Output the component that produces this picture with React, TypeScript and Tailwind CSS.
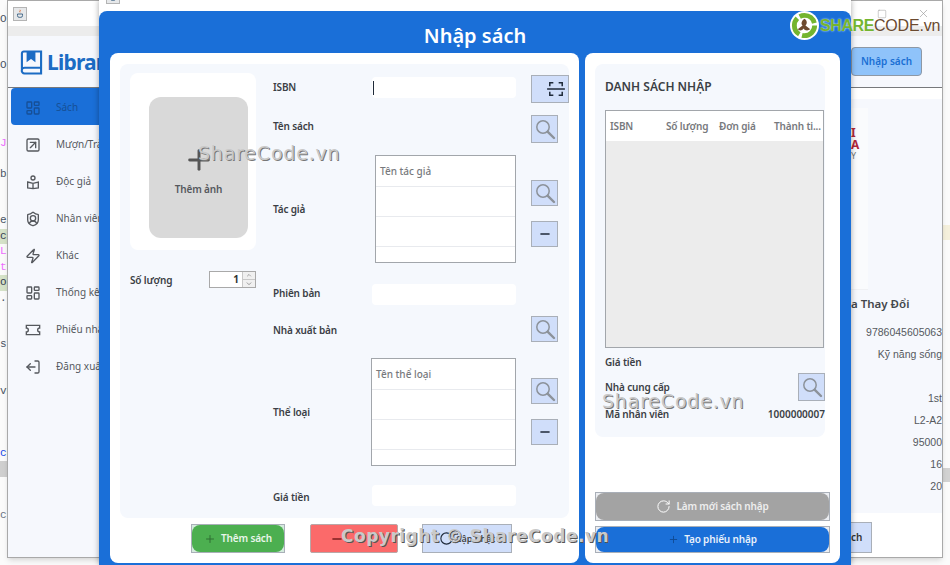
import { Minus, Plus, RotateCw, LayoutDashboard, SquareArrowUpRight, ShieldUser, Zap, LogOut, X, Square, ChevronUp, ChevronDown } from 'lucide-react';
import type { ReactNode } from 'react';

const font = "font-['Noto_Sans',sans-serif]";

const codeLines = [
  { t: '', c: '' }, { t: 'Oz', c: 'text-gray-600' }, { t: '', c: '' }, { t: '', c: '' },
  { t: 'Oz', c: 'text-gray-600' }, { t: '', c: '' }, { t: '', c: '' }, { t: '', c: '' },
  { t: '', c: '' }, { t: 'JS', c: 'text-fuchsia-400' }, { t: '', c: '' }, { t: 'ba', c: 'text-gray-600' },
  { t: '', c: '' }, { t: '', c: '' }, { t: 'es', c: 'text-gray-600' }, { t: 'c:l', c: 'text-gray-700 bg-[#d5e2c8]' },
  { t: 'Le', c: 'text-fuchsia-400' }, { t: 't', c: 'text-fuchsia-400' }, { t: 'or', c: 'text-gray-700 bg-[#d5e2c8]' }, { t: '.s', c: 'text-gray-600' },
  { t: '', c: '' }, { t: '', c: '' }, { t: 's', c: 'text-gray-600' }, { t: '', c: '' },
  { t: '', c: '' }, { t: 'vN', c: 'text-gray-600' }, { t: '', c: '' }, { t: '', c: '' },
  { t: '', c: '' }, { t: 'c1', c: 'text-blue-700' }, { t: '', c: 'bg-[#cfcfcf]' }, { t: '', c: '' },
  { t: '', c: '' }, { t: 'c', c: 'text-gray-500' },
];

const sideItems = [
  { label: 'Sách', icon: LayoutDashboard, active: true },
  { label: 'Mượn/Trả', icon: SquareArrowUpRight },
  { label: 'Độc giả', icon: ReaderIcon },
  { label: 'Nhân viên', icon: ShieldUser },
  { label: 'Khác', icon: Zap },
  { label: 'Thống kê', icon: LayoutDashboard },
  { label: 'Phiếu nhập', icon: TicketIcon },
  { label: 'Đăng xuất', icon: LogOut, flip: true },
];

const backValues = ['9786045605063', 'Kỹ năng sống', '', '1st', 'L2-A2', '95000', '16', '20'];

function ReaderIcon({ className }: { className?: string }) {
  return (
    <svg viewBox="0 0 24 24" fill="none" stroke="currentColor" strokeWidth="2" className={className}>
      <circle cx="12" cy="6" r="3" />
      <path d="M4 12l8 2 8-2v9l-8 1-8-1z M12 14v8" />
    </svg>
  );
}

function TicketIcon({ className }: { className?: string }) {
  return (
    <svg viewBox="0 0 24 24" fill="none" stroke="currentColor" strokeWidth="2" className={className}>
      <path d="M2 5h20v4a3 3 0 0 0 0 6v4H2v-4a3 3 0 0 0 0-6z" />
    </svg>
  );
}

function BookLogo() {
  return (
    <svg viewBox="0 0 24 25" className="w-[23px] h-[25px] text-[#1c6cc4]" fill="none" stroke="currentColor" strokeWidth="2.2">
      <path d="M2 20V3a2 2 0 0 1 2-2h18v23H5a3 3 0 0 1-3-4c0-1 1-2 3-2h17" />
      <path d="M8 1v9l3.5-2.5L15 10V1" fill="currentColor" />
    </svg>
  );
}

function MagnifierIcon() {
  return (
    <svg viewBox="0 0 22 22" className="w-[22px] h-[22px] text-[#8c929a]" fill="none" stroke="currentColor">
      <circle cx="9" cy="9" r="6.2" strokeWidth="1.5" />
      <path d="M13.8 13.8L20 20" strokeWidth="2.4" strokeLinecap="round" />
    </svg>
  );
}

function ScanIcon() {
  return (
    <svg viewBox="0 0 20 18" className="w-[18px] h-[16px] text-[#1f2a3a] ml-[12px]" fill="none" stroke="currentColor" strokeWidth="1.7">
      <path d="M3 6V2h4 M13 2h4v4 M3 12v4h4 M13 16h4v-4" />
      <path d="M0 9h20" />
    </svg>
  );
}

function SquareBtn({ children, w = 'w-[27px]', h = 'h-[27px]' }: { children: ReactNode; w?: string; h?: string }) {
  return (
    <div className={`${w} ${h} shrink-0 flex items-center justify-center bg-[#d0defa] border border-[#a9afb8]`}>
      {children}
    </div>
  );
}

const SearchBtn = ({ h = 'h-[26px]' }: { h?: string }) => (
  <SquareBtn h={h}>
    <MagnifierIcon />
  </SquareBtn>
);

const MinusBtn = () => (
  <SquareBtn h="h-[26px]">
    <Minus className="w-[14px] h-[14px] text-[#1f2a3a]" strokeWidth={2.4} />
  </SquareBtn>
);

const Label = ({ children }: { children: ReactNode }) => (
  <span className="block ml-[1px] text-[10px] tracking-[-0.15px] font-semibold text-[#3b3f45] leading-none whitespace-nowrap">{children}</span>
);

function Field({ label, pt, caret }: { label: string; pt: string; caret?: boolean }) {
  return (
    <div className="flex items-start h-[21px]">
      <div className={`w-[100px] ${pt}`}><Label>{label}</Label></div>
      <div className="w-[144px] h-[21px] bg-white rounded-sm flex items-center pl-[1px]">
        {caret && <div className="w-px h-[14px] bg-gray-800" />}
      </div>
    </div>
  );
}

function MiniTable({ title, w }: { title: string; w: string }) {
  return (
    <div className={`${w} h-[108px] bg-white border border-[#a2a6ab] flex flex-col`}>
      <div className="h-[31px] shrink-0 flex items-center pl-1 border-b border-[#e8eaee] text-[10px] font-medium text-[#77797d]">{title}</div>
      <div className="h-[30px] shrink-0 border-b border-[#e8eaee]" />
      <div className="h-[30px] shrink-0 border-b border-[#e8eaee]" />
    </div>
  );
}

function FrameBtn({ w, h, corner, fill, children }: { w: string; h: string; corner: string; fill: string; children: ReactNode }) {
  return (
    <div className={`${w} ${h} shrink-0 border border-[#a9afb8] ${corner} flex`}>
      <div className={`flex-1 rounded-lg flex items-center justify-center gap-[5px] text-[10px] tracking-[-0.15px] font-semibold ${fill}`}>
        {children}
      </div>
    </div>
  );
}

function BackWindow() {
  return (
    <div className={`absolute left-[7px] top-0 w-[936px] h-[558px] bg-[#f6f8fd] border border-[#a9a9a9] shadow-md flex flex-col overflow-hidden ${font}`}>
      <div className="h-[25px] shrink-0 bg-white flex items-center justify-between pl-[5px] pr-[12px]">
        <JavaIcon />
        <div className="flex items-center gap-[30px] text-[#999]">
          <Square className="w-[10px] h-[10px]" strokeWidth={1.2} />
          <X className="w-[13px] h-[13px]" strokeWidth={1.2} />
        </div>
      </div>
      <div className="h-[10px] shrink-0 bg-[#ececec]" />
      <div className="h-[52px] shrink-0 bg-[#f6f8fd] border-b border-[#77797c] flex items-center justify-between pl-[12px] pr-[20px]">
        <div className="flex items-center gap-[4px] pt-[2px]">
          <BookLogo />
          <span className="text-[21px] tracking-[-0.8px] font-bold text-[#1c6cc4]">Library</span>
        </div>
        <div className="w-[71px] h-[29px] bg-[#8fc3fa] border border-[#8d98a5] rounded-sm flex items-center justify-center text-[10px] font-semibold text-[#1a6fd4]">Nhập sách</div>
      </div>
      <div className="flex-1 flex">
        <div className="w-[92px] pl-[3px] flex flex-col">
          {sideItems.map((item) => (
            <div key={item.label} className={`h-[37px] pt-[2px] flex items-center pl-[14px] gap-[15px] text-[10px] whitespace-nowrap ${item.active ? 'bg-[#1a6fd8] rounded-l-sm text-[#164f96]' : 'text-[#55585d]'}`}>
              <item.icon className={`w-[16px] h-[16px] shrink-0 ${item.flip ? '-scale-x-100' : ''}`} />
              <span>{item.label}</span>
            </div>
          ))}
        </div>
        <div className="flex-1 flex justify-end">
          <div className="w-[92px] flex flex-col">
            <div className="h-[11px] shrink-0 bg-white" />
            <div className="mt-[9px] w-[18px] h-[182px] pt-[19px] pl-[1px] bg-[#fafbfd] border-b border-[#f0f1f4]">
              <div className="text-[12px] leading-[12px] font-bold text-[#b3283a]">I<br />A</div>
              <div className="text-[9px] leading-[10px] text-[#777]">Y</div>
            </div>
            <div className="mt-[6px] pl-[1px] h-[16px] leading-[16px] text-[11.5px] font-semibold text-[#44474c] whitespace-nowrap">a Thay Đổi</div>
            <div className="mt-[10px] flex flex-col items-end text-[10.5px] text-[#55585d]">
              {backValues.map((v, i) => (
                <div key={i} className="h-[22px] flex items-center font-['Liberation_Sans',sans-serif]">{v}</div>
              ))}
            </div>
            <div className="mt-[15px] flex-1 bg-white pt-[9px]">
              <div className="w-[22px] h-[31px] bg-[#d0defa] border border-[#a9afb8] flex items-center text-[10px] font-semibold text-[#333]">ch</div>
            </div>
          </div>
        </div>
      </div>
    </div>
  );
}

function JavaIcon() {
  return (
    <div className="w-[14px] h-[14px] bg-[#e6e8ea] border border-[#b4b4b4] flex items-center justify-center">
      <svg viewBox="0 0 12 12" className="w-[10px] h-[10px]" fill="none" strokeWidth="1.2">
        <path d="M6 1c1 1-1 2 0 3" stroke="#d9652b" />
        <path d="M3 6h6v2a2 2 0 0 1-2 2H5a2 2 0 0 1-2-2z" stroke="#4a6d8c" />
      </svg>
    </div>
  );
}

function LeftPanel() {
  return (
    <div className="w-[469px] h-full bg-white rounded-lg p-[10px] pt-[11px] flex flex-col">
      <div className="w-[449px] h-[454px] bg-[#f5f8fd] flex pl-[10px] pt-[9px] rounded-lg">
        <div className="w-[127px] mr-[16px]">
          <div className="h-[177px] bg-white rounded-lg pl-[19px] pt-[24px]">
            <div className="w-[99px] h-[141px] bg-[#d9d9d9] rounded-xl flex flex-col items-center pt-[47px]">
              <Plus className="w-[32px] h-[32px] text-[#555]" strokeWidth={2.2} />
              <span className="mt-[6px] text-[10px] leading-[15px] tracking-[-0.15px] font-semibold text-[#55585d]">Thêm ảnh</span>
            </div>
          </div>
          <div className="mt-[21px] flex items-center justify-between">
            <div className="-ml-[1px]"><Label>Số lượng</Label></div>
            <div className="w-[47px] h-[17px] bg-white border border-[#a9a9a9] flex">
              <div className="flex-1 text-right pr-[3px] text-[10px] font-bold leading-[15px] text-[#333]">1</div>
              <div className="w-[13px] border-l border-[#c8c8c8] flex flex-col bg-[#f0f0f0]">
                <ChevronUp className="w-[12px] h-[7.5px] text-[#666] border-b border-[#c8c8c8]" />
                <ChevronDown className="w-[12px] h-[7.5px] text-[#666]" />
              </div>
            </div>
          </div>
        </div>
        <div className="w-[297px] flex flex-col">
          <div className="flex items-start h-[28px] mt-[2px]">
            <div className="pt-[2px]"><Field label="ISBN" pt="pt-[5px]" caret /></div>
            <div className="ml-[15px]">
              <SquareBtn w="w-[38px]" h="h-[28px]">
                <ScanIcon />
              </SquareBtn>
            </div>
          </div>
          <div className="flex items-start h-[28px] mt-[12px]">
            <div className="w-[259px] pt-[6px]"><Label>Tên sách</Label></div>
            <SearchBtn h="h-[28px]" />
          </div>
          <div className="flex mt-[12px]">
            <div className="w-[103px] pt-[49px]"><Label>Tác giả</Label></div>
            <MiniTable title="Tên tác giả" w="w-[141px]" />
            <div className="ml-[15px] pt-[25px] flex flex-col gap-[15px]">
              <SearchBtn />
              <MinusBtn />
            </div>
          </div>
          <div className="mt-[21px]"><Field label="Phiên bản" pt="pt-[4px]" /></div>
          <div className="flex items-start h-[27px] mt-[11px]">
            <div className="w-[259px] pt-[9px]"><Label>Nhà xuất bản</Label></div>
            <SearchBtn />
          </div>
          <div className="flex mt-[15px]">
            <div className="w-[99px] pt-[49px]"><Label>Thể loại</Label></div>
            <MiniTable title="Tên thể loại" w="w-[145px]" />
            <div className="ml-[15px] pt-[20px] flex flex-col gap-[15px]">
              <SearchBtn />
              <MinusBtn />
            </div>
          </div>
          <div className="mt-[19px]"><Field label="Giá tiền" pt="pt-[7px]" /></div>
        </div>
      </div>
      <div className="mt-[6px] flex pl-[71px]">
        <FrameBtn w="w-[94px]" h="h-[29px]" corner="bg-[#d4ebdd]" fill="bg-[#4caf50] text-[#e9f6ea]">
          <Plus className="w-[12px] h-[12px] text-[#2f6f33]" />
          Thêm sách
        </FrameBtn>
        <div className="ml-[25px] w-[88px] h-[29px] bg-[#fb6a6a] flex items-center justify-start pl-[19px] border border-[#b9a7a7] rounded-[2px]">
          <Minus className="w-[14px] h-[14px] text-[#7c1f1f]" strokeWidth={2.4} />
        </div>
        <div className="ml-[24px] w-[90px] h-[29px] bg-[#d0defa] border border-[#a9afb8] flex items-center justify-center gap-[2px] text-[9px] font-semibold text-[#444]">
          <RotateCw className="w-[15px] h-[15px] text-[#1f2a3a] shrink-0" strokeWidth={1.8} />
          Cập nhật
        </div>
      </div>
    </div>
  );
}

function RightPanel() {
  return (
    <div className="w-[255px] h-full bg-white rounded-lg pl-[10px] pt-[11px] flex flex-col">
      <div className="w-[230px] h-[373px] bg-[#f5f8fd] rounded-lg pl-[10px] flex flex-col">
        <div className="h-[46px] flex items-center text-[12px] font-semibold text-[#3b3f45]">DANH SÁCH NHẬP</div>
        <div className="w-[219px] h-[238px] bg-[#ececec] border border-[#a2a6ab] flex flex-col">
          <div className="h-[30px] bg-white grid grid-cols-[56px_53px_55px_1fr] items-center pl-[4px] text-[10px] tracking-[-0.15px] font-semibold text-[#77797d] whitespace-nowrap">
            <span>ISBN</span><span>Số lượng</span><span>Đơn giá</span><span>Thành ti...</span>
          </div>
        </div>
        <div className="mt-[9px] -ml-[1px]"><Label>Giá tiền</Label></div>
        <div className="mt-[6px] -ml-[1px] flex items-center justify-between h-[28px] w-[221px]">
          <Label>Nhà cung cấp</Label>
          <SearchBtn h="h-[28px]" />
        </div>
        <div className="mt-[8px] flex items-center justify-between w-[220px] text-[10px] leading-none font-semibold text-[#3b3f45]">
          <span className="tracking-[-0.15px]">Mã nhân viên</span><span>1000000007</span>
        </div>
      </div>
      <div className="mt-[55px]">
        <FrameBtn w="w-[235px]" h="h-[29px]" corner="bg-[#eceef2]" fill="bg-[#a3a3a3] text-[#eee]">
          <RotateCw className="w-[15px] h-[15px] text-white" strokeWidth={1.6} />
          Làm mới sách nhập
        </FrameBtn>
      </div>
      <div className="mt-[5px]">
        <FrameBtn w="w-[235px]" h="h-[27px]" corner="bg-[#eceef2]" fill="bg-[#1a6fd8] text-[#e8f0fb]">
          <Plus className="w-[11px] h-[11px] text-[#0f4a94]" />
          Tạo phiếu nhập
        </FrameBtn>
      </div>
    </div>
  );
}

function Modal() {
  return (
    <div className={`absolute left-[99px] top-0 w-[752px] h-[565px] flex flex-col overflow-hidden shadow-[0_0_6px_rgba(0,0,0,0.35)] ${font}`}>
      <div className="h-[11px] shrink-0 bg-white pl-[7px] pr-[7px] flex justify-between">
        <div className="-mt-[10px]"><JavaIcon /></div>
        <X className="-mt-[10px] w-[13px] h-[13px] text-[#888]" strokeWidth={1.2} />
      </div>
      <div className="flex-1 bg-[#1a6fd8] rounded-t-lg px-[11px] pb-[2px] flex flex-col">
        <div className="h-[42px] pt-[8px] shrink-0 flex items-center justify-center text-[20px] font-semibold text-white">Nhập sách</div>
        <div className="flex-1 flex gap-[6px] min-h-0">
          <LeftPanel />
          <RightPanel />
        </div>
      </div>
    </div>
  );
}

function Watermarks() {
  return (
    <>
      <div className="absolute left-[198px] top-[139px] text-[19px] tracking-[0.8px] text-[#c9c9c9] [text-shadow:1px_1px_0_#777] font-['DejaVu_Sans',sans-serif]">ShareCode.vn</div>
      <div className="absolute left-[602px] top-[387px] text-[19px] tracking-[0.8px] text-[#c9c9c9] [text-shadow:1px_1px_0_#777] font-['DejaVu_Sans',sans-serif]">ShareCode.vn</div>
      <div className="absolute left-[341px] top-[524px] text-[17px] tracking-[0.5px] font-bold text-[#c9c9c9] [text-shadow:1px_1px_0_#555] font-['DejaVu_Sans',sans-serif] whitespace-nowrap">Copyright © ShareCode.vn</div>
      <div className="absolute left-[790px] top-[11px] flex items-center">
        <svg viewBox="0 0 30 30" className="w-[29px] h-[29px]">
          <circle cx="15" cy="15" r="15" fill="#fff" />
          <circle cx="15" cy="15" r="10.5" fill="none" stroke="#74b52f" strokeWidth="5" strokeDasharray="19 3" />
          <path d="M15 8c3 2 3 5 1 7l5 4c-3 2-6 1-7-1-1 2-4 3-6 1l5-4c-2-2-1-5 2-7z" fill="#6d4a30" />
        </svg>
        <span className="ml-[1px] text-[16px] leading-[20px] font-bold tracking-[-0.4px] text-[#74b52f] font-['Liberation_Sans',sans-serif] [text-shadow:0_0_2px_#fff]">SHARE</span>
        <span className="text-[16px] leading-[20px] tracking-[-0.2px] text-[#6b4a30] font-['Liberation_Sans',sans-serif] [text-shadow:0_0_2px_#fff]">CODE.vn</span>
      </div>
    </>
  );
}

export default function App() {
  return (
    <div className="relative w-[950px] h-[565px] overflow-hidden bg-[#fbfbfb] flex justify-between">
      <div className="w-[8px] -mt-[4px] flex flex-col overflow-hidden font-['Liberation_Mono',monospace] text-[11px]">
        {codeLines.map((l, i) => (
          <div key={i} className={`h-[15.5px] shrink-0 leading-[15.5px] whitespace-nowrap ${l.c}`}>{l.t}</div>
        ))}
      </div>
      <div className="w-[7px] flex flex-col">
        <div className="mt-[225px] h-[15px] bg-[#f5f0dc]" />
        <div className="mt-[228px] h-[14px] bg-[#d2d2d2]" />
      </div>
      <BackWindow />
      <Modal />
      <Watermarks />
    </div>
  );
}
